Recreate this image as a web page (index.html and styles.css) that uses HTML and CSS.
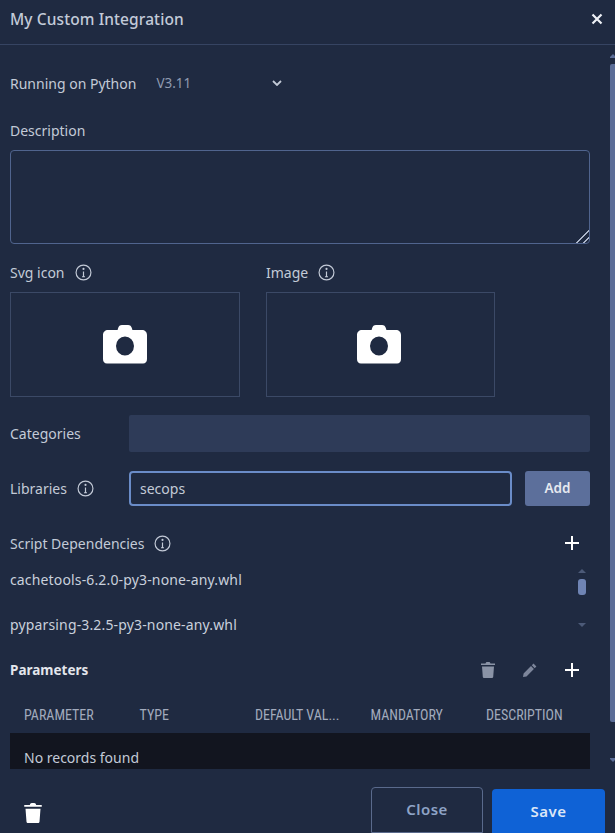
FILE: index.html
```html
<!DOCTYPE html>
<html lang="en">
<head>
  <meta charset="UTF-8">
  <meta name="viewport" content="width=device-width, initial-scale=1.0">
  <title>My Custom Integration</title>
  <link rel="stylesheet" href="styles.css">
</head>
<body>
  <div class="modal">
    <header class="modal-header">
      <h1>My Custom Integration</h1>
      <svg class="close-icon" viewBox="0 0 12 12"><path d="M1.5 1.5l9 9M10.5 1.5l-9 9"/></svg>
    </header>

    <div class="modal-main">
      <div class="modal-body">
        <div class="python-row">
          <span class="label">Running on Python</span>
          <span class="python-version">V3.11</span>
          <svg class="chevron" viewBox="0 0 10 6"><path d="M1 1l4 4 4-4"/></svg>
        </div>

        <div class="label description-label">Description</div>
        <textarea class="description" spellcheck="false"></textarea>

        <div class="upload-row">
          <div class="upload">
            <div class="label-row">
              <span class="label">Svg icon</span>
              <svg class="info-icon" viewBox="0 0 16 16"><circle cx="8" cy="8" r="7"/><path d="M8 7v5M6.6 12h2.8"/><circle class="dot" cx="8" cy="4.6" r="1"/></svg>
            </div>
            <div class="upload-box">
              <svg class="camera" viewBox="0 0 44 40"><path fill-rule="evenodd" d="M15 4.5C15.6 2 17 1 19 1h6c2 0 3.4 1 4 3.5l.4 1.5H39c2.8 0 5 2 5 5v24c0 2.8-1.5 4.5-4 4.5H4c-2.5 0-4-1.700-4-4.500V11c0-3 2.200-5 5-5h9.600zM22 12.500a9 9.500 0 1 0 0 19 9 9.500 0 1 0 0-19z"/></svg>
            </div>
          </div>
          <div class="upload">
            <div class="label-row">
              <span class="label">Image</span>
              <svg class="info-icon" viewBox="0 0 16 16"><circle cx="8" cy="8" r="7"/><path d="M8 7v5M6.6 12h2.8"/><circle class="dot" cx="8" cy="4.6" r="1"/></svg>
            </div>
            <div class="upload-box">
              <svg class="camera" viewBox="0 0 44 40"><path fill-rule="evenodd" d="M15 4.5C15.6 2 17 1 19 1h6c2 0 3.4 1 4 3.5l.4 1.5H39c2.8 0 5 2 5 5v24c0 2.8-1.5 4.5-4 4.500H4c-2.500 0-4-1.700-4-4.500V11c0-3 2.200-5 5-5h9.600zM22 12.500a9 9.500 0 1 0 0 19 9 9.500 0 1 0 0-19z"/></svg>
            </div>
          </div>
        </div>

        <div class="field-row categories-row">
          <span class="label field-label">Categories</span>
          <div class="categories-input"></div>
        </div>

        <div class="field-row libraries-row">
          <div class="label-row field-label">
            <span class="label">Libraries</span>
            <svg class="info-icon" viewBox="0 0 16 16"><circle cx="8" cy="8" r="7"/><path d="M8 7v5M6.6 12h2.8"/><circle class="dot" cx="8" cy="4.6" r="1"/></svg>
          </div>
          <input class="libraries-input" type="text" value="secops" spellcheck="false">
          <button class="add-btn">Add</button>
        </div>

        <div class="section-row dependencies-head">
          <div class="label-row">
            <span class="label">Script Dependencies</span>
            <svg class="info-icon" viewBox="0 0 16 16"><circle cx="8" cy="8" r="7"/><path d="M8 7v5M6.6 12h2.8"/><circle class="dot" cx="8" cy="4.6" r="1"/></svg>
          </div>
          <svg class="plus-icon" viewBox="0 0 14 14"><path d="M7 0v14M0 7h14"/></svg>
        </div>

        <div class="dependencies">
          <ul class="dependency-list">
            <li>cachetools-6.2.0-py3-none-any.whl</li>
            <li>pyparsing-3.2.5-py3-none-any.whl</li>
          </ul>
          <div class="mini-scroll">
            <span class="arrow-up"></span>
            <span class="mini-thumb"></span>
            <span class="arrow-down"></span>
          </div>
        </div>

        <div class="section-row parameters-head">
          <span class="parameters-title">Parameters</span>
          <div class="parameter-actions">
            <svg class="trash-icon muted" viewBox="0 0 14 16"><path d="M4.5 1.5C4.7.6 5.2 0 6 0h2c.8 0 1.3.6 1.5 1.5H14V3H0V1.5zM1 4.500h12L12.200 15c-.1.600-.5 1-1.200 1H3c-.7 0-1.100-.4-1.200-1z"/></svg>
            <svg class="pencil-icon" viewBox="0 0 14 14"><path d="M10.500.6l2.900 2.900-1.700 1.700-2.900-2.900zM8 3.100L10.900 6l-7.400 7.400L0 14l.6-3.500z"/></svg>
            <svg class="plus-icon" viewBox="0 0 14 14"><path d="M7 0v14M0 7h14"/></svg>
          </div>
        </div>

        <div class="parameters-table">
          <div class="table-head">
            <span>PARAMETER</span>
            <span>TYPE</span>
            <span>DEFAULT VAL...</span>
            <span>MANDATORY</span>
            <span>DESCRIPTION</span>
          </div>
          <div class="table-body">No records found</div>
        </div>
      </div>

      <div class="page-scroll">
        <span class="arrow-up"></span>
        <span class="page-thumb"></span>
        <span class="arrow-down"></span>
      </div>
    </div>

    <footer class="modal-footer">
      <svg class="trash-icon delete-all" viewBox="0 0 14 16"><path d="M4.500 1.500C4.700.6 5.200 0 6 0h2c.8 0 1.300.6 1.500 1.500H14V3H0V1.500zM1 4.500h12L12.200 15c-.1.600-.5 1-1.200 1H3c-.7 0-1.100-.4-1.200-1z"/></svg>
      <div class="footer-buttons">
        <button class="close-btn">Close</button>
        <button class="save-btn">Save</button>
      </div>
    </footer>
  </div>
</body>
</html>
```

FILE: styles.css
```css
* {
  box-sizing: border-box;
  margin: 0;
  padding: 0;
}

html,
body {
  height: 100%;
}

body {
  background-color: #1f2a41;
  color: #c9d0dc;
  font-family: "Noto Sans", sans-serif;
  font-size: 14px;
  overflow: hidden;
}

.modal {
  display: flex;
  flex-direction: column;
  height: 833px;
}

.modal-header {
  display: flex;
  justify-content: space-between;
  align-items: center;
  flex: none;
  height: 45px;
  padding: 0 12px 6px 10px;
  border-bottom: 1px solid #364462;
}

.modal-header h1 {
  color: #c3cbd9;
  font-size: 15.5px;
  font-weight: 500;
  letter-spacing: 0.1px;
}

.close-icon {
  width: 12px;
  height: 12px;
  fill: none;
  stroke: #eef1f6;
  stroke-width: 2.2;
}

.modal-main {
  display: flex;
  flex: none;
  height: 725px;
  overflow: hidden;
}

.modal-body {
  flex: 1;
  padding: 0 20px 0 10px;
  overflow: hidden;
}

.label {
  color: #c3cad7;
  white-space: nowrap;
}

.label-row {
  display: flex;
  align-items: center;
  gap: 10px;
}

.info-icon {
  width: 17px;
  height: 17px;
  fill: none;
  stroke: #c3cad7;
  stroke-width: 1.1;
}

.info-icon .dot {
  fill: #c3cad7;
  stroke: none;
}

.python-row {
  display: flex;
  align-items: center;
  height: 20px;
  margin-top: 28px;
}

.python-version {
  margin-left: 20px;
  color: #8f9ab0;
  font-size: 13.5px;
}

.chevron {
  width: 10px;
  height: 6px;
  margin-left: 81px;
  fill: none;
  stroke: #c3cad7;
  stroke-width: 1.8;
}

.description-label {
  margin-top: 28px;
  line-height: 20px;
}

.description {
  display: block;
  width: 100%;
  height: 94px;
  margin-top: 9px;
  background: transparent;
  border: 1px solid #50648e;
  border-radius: 4px;
  outline: none;
}

.description::-webkit-resizer {
  background: linear-gradient(135deg, transparent 55%, #aeb8cc 55%, #aeb8cc 63%, transparent 63%, transparent 78%, #aeb8cc 78%, #aeb8cc 86%, transparent 86%);
}

.upload-row {
  display: flex;
  gap: 26px;
  margin-top: 18px;
}

.upload .label-row {
  height: 20px;
}

.upload-box {
  display: flex;
  justify-content: center;
  align-items: center;
  width: 230px;
  height: 105px;
  margin-top: 10px;
  border: 1px solid #3b4966;
}

.upload + .upload .upload-box {
  width: 229px;
}

.camera {
  width: 44px;
  height: 40px;
  margin-bottom: 1px;
  fill: #fff;
}

.upload + .upload .camera {
  margin-right: 3px;
}

.field-row {
  display: flex;
  align-items: center;
}

.field-label {
  flex: none;
  width: 119px;
}

.categories-row {
  margin-top: 18px;
}

.categories-input {
  flex: 1;
  height: 37px;
  background-color: #2e3b58;
  border-radius: 2px;
}

.libraries-row {
  margin-top: 19px;
}

.libraries-input {
  flex: 1;
  min-width: 0;
  height: 35px;
  padding: 0 9px;
  background: transparent;
  border: 2px solid #6a8cc8;
  border-radius: 4px;
  color: #c3cad7;
  font-family: inherit;
  font-size: 14px;
  outline: none;
}

.add-btn {
  flex: none;
  width: 65px;
  height: 35px;
  margin-left: 13px;
  padding-bottom: 2px;
  background-color: #5c6f9b;
  border: none;
  border-radius: 3px;
  color: #e6e9f0;
  font-family: inherit;
  font-size: 13.5px;
  font-weight: 600;
}

.section-row {
  display: flex;
  justify-content: space-between;
  align-items: center;
  padding-right: 11px;
}

.plus-icon {
  width: 14px;
  height: 14px;
  fill: none;
  stroke: #fff;
  stroke-width: 2;
}

.dependencies-head {
  height: 20px;
  margin-top: 27px;
}

.dependencies {
  display: flex;
  justify-content: space-between;
  height: 80px;
  margin-top: 14px;
}

.dependency-list {
  list-style: none;
  letter-spacing: 0.15px;
}

.dependency-list li {
  height: 45px;
  padding-top: 3px;
  line-height: 20px;
}

.mini-scroll {
  display: flex;
  flex-direction: column;
  align-items: center;
  width: 10px;
  margin-right: 3px;
  padding-top: 2px;
}

.arrow-up,
.arrow-down {
  width: 0;
  height: 0;
  border-left: 4px solid transparent;
  border-right: 4px solid transparent;
}

.mini-scroll .arrow-up {
  border-bottom: 4px solid #4c5a78;
}

.mini-scroll .arrow-down {
  margin-top: 28px;
  border-top: 4px solid #4c5a78;
}

.mini-thumb {
  width: 8px;
  height: 16px;
  margin-top: 6px;
  background-color: #6f84b4;
  border-radius: 3px;
}

.parameters-head {
  height: 24px;
  margin-top: 11px;
}

.parameters-title {
  color: #e3e6ec;
  font-size: 13.5px;
  font-weight: 700;
}

.parameter-actions {
  display: flex;
  align-items: center;
  gap: 28px;
}

.trash-icon {
  width: 14px;
  height: 16px;
  fill: #fff;
}

.trash-icon.muted {
  fill: #8a93a6;
}

.pencil-icon {
  width: 14px;
  height: 14px;
  fill: #7d869b;
}

.parameters-table {
  margin-top: 17px;
}

.table-head {
  display: grid;
  grid-template-columns: repeat(5, 115.5px);
  align-items: center;
  height: 34px;
  padding: 0 0 2px 14px;
  color: #a2abbd;
  font-family: "Roboto", sans-serif;
  font-size: 14px;
  font-stretch: condensed;
  white-space: nowrap;
}

.table-body {
  height: 36px;
  padding: 15px 14px 0;
  overflow: hidden;
  background-color: #12151f;
  color: #c3cad7;
  line-height: 20px;
}

.page-scroll {
  display: flex;
  flex-direction: column;
  align-items: center;
  flex: none;
  width: 5px;
  padding-top: 9px;
  overflow: hidden;
}

.page-scroll .arrow-up {
  border-bottom: 4px solid #5b6d97;
}

.page-scroll .arrow-down {
  margin-top: 36px;
  border-top: 4px solid #5b6d97;
}

.page-thumb {
  flex: none;
  width: 5px;
  height: 658px;
  margin-top: 6px;
  background-color: #5b6d97;
  border-radius: 2px 0 0 2px;
}

.modal-footer {
  display: flex;
  justify-content: space-between;
  align-items: flex-end;
  flex: 1;
  padding: 0 10px 0 24px;
}

.delete-all {
  width: 18px;
  height: 20px;
  margin-bottom: 10px;
}

.footer-buttons {
  display: flex;
  align-items: flex-end;
  gap: 9px;
}

.close-btn,
.save-btn {
  font-family: inherit;
  font-size: 15px;
  font-weight: 600;
  letter-spacing: 0.5px;
  border-radius: 4px 4px 0 0;
}

.close-btn {
  width: 112px;
  height: 46px;
  padding-bottom: 2px;
  background: transparent;
  border: 1px solid #5a6a8c;
  color: #8ea3c6;
}

.save-btn {
  width: 113px;
  height: 44px;
  background-color: #0f62d6;
  border: none;
  color: #dbe6f7;
}
```
